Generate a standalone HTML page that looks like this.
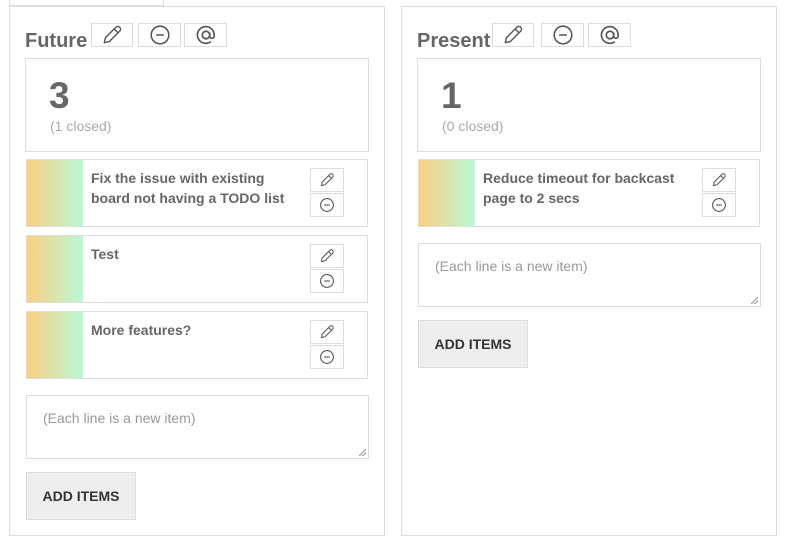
<!DOCTYPE html>
<html><head><style>
*{box-sizing:border-box;margin:0;padding:0}
body{width:791px;height:542px;background:#fff;font-family:"Liberation Sans",Arial,sans-serif;position:relative;overflow:hidden}
.abs{position:absolute}
.col{position:absolute;top:6px;width:376px;height:530px;border:1px solid #ddd}
.title{position:absolute;font-size:20px;font-weight:bold;color:#666}
.ib{position:absolute;top:23px;height:24px;border:1px solid #ddd;display:flex;align-items:center;justify-content:center}
.count{position:absolute;top:58px;width:344px;height:94px;border:1px solid #ddd}
.count b{position:absolute;left:23px;top:16px;font-size:37px;color:#666}
.count span{position:absolute;left:24px;top:59px;font-size:14px;color:#aaa}
.card{position:absolute;width:342px;height:68px;border:1px solid #ddd}
.card .g{position:absolute;left:0;top:0;width:56px;height:66px;background:linear-gradient(90deg,#fccf80,#b8fad6)}
.card .t{position:absolute;left:64px;top:8px;width:210px;font-size:14px;font-weight:bold;color:#666;line-height:20px}
.sb{position:absolute;left:283px;width:34px;height:24px;border:1px solid #ddd;display:flex;align-items:center;justify-content:center}
.ta{position:absolute;width:343px;height:64px;border:1px solid #ddd;font-size:14px;color:#999;padding:14px 16px}
.ta:after{content:"";position:absolute;right:2px;bottom:2px;width:7px;height:7px;background:linear-gradient(135deg,transparent 45%,#999 45%,#999 55%,transparent 55%,transparent 70%,#999 70%,#999 80%,transparent 80%)}
.btn{position:absolute;width:110px;height:48px;background:#eee;border:1px solid #ddd;font-size:14px;font-weight:bold;color:#333;display:flex;align-items:center;justify-content:center}
</style></head><body>
<div class="abs" style="left:9px;top:-1px;width:155px;height:7px;border:1px solid #ddd;border-top:none"></div>
<svg width="0" height="0" style="position:absolute"><defs>
<symbol id="pen" viewBox="0 0 20 20"><path d="M3 17l1-4.5L13.5 3a1.8 1.8 0 0 1 3.5 3.5L7.5 16z M12 4.5l3.5 3.5" fill="none" stroke="#555" stroke-width="1.3" stroke-linejoin="round"/></symbol>
<symbol id="min" viewBox="0 0 20 20"><circle cx="10" cy="10" r="8" fill="none" stroke="#555" stroke-width="1.4"/><path d="M6.5 10h7" stroke="#555" stroke-width="1.4"/></symbol>
<symbol id="at" viewBox="0 0 20 20"><circle cx="10" cy="10" r="3.4" fill="none" stroke="#555" stroke-width="1.5"/><path d="M13.4 8v3a2 2 0 0 0 4 0v-1a7.6 7.6 0 1 0-3 6" fill="none" stroke="#555" stroke-width="1.5"/></symbol>
</defs></svg>

<div class="col" style="left:9px"></div>
<div class="title" style="left:25px;top:30px">Future</div>
<div class="ib" style="left:91px;width:42px"><svg width="22" height="22"><use href="#pen"/></svg></div>
<div class="ib" style="left:138px;width:43px"><svg width="22" height="22"><use href="#min"/></svg></div>
<div class="ib" style="left:184px;width:43px"><svg width="22" height="22"><use href="#at"/></svg></div>
<div class="count" style="left:25px"><b>3</b><span>(1 closed)</span></div>
<div class="card" style="left:26px;top:159px"><div class="g"></div><div class="t">Fix the issue with existing board not having a TODO list</div><div class="sb" style="top:8px"><svg width="16" height="16"><use href="#pen"/></svg></div><div class="sb" style="top:33px"><svg width="16" height="16"><use href="#min"/></svg></div></div>
<div class="card" style="left:26px;top:235px"><div class="g"></div><div class="t">Test</div><div class="sb" style="top:8px"><svg width="16" height="16"><use href="#pen"/></svg></div><div class="sb" style="top:33px"><svg width="16" height="16"><use href="#min"/></svg></div></div>
<div class="card" style="left:26px;top:311px"><div class="g"></div><div class="t">More features?</div><div class="sb" style="top:8px"><svg width="16" height="16"><use href="#pen"/></svg></div><div class="sb" style="top:33px"><svg width="16" height="16"><use href="#min"/></svg></div></div>
<div class="ta" style="left:26px;top:395px">(Each line is a new item)</div>
<div class="btn" style="left:26px;top:472px">ADD ITEMS</div>

<div class="col" style="left:401px"></div>
<div class="title" style="left:417px;top:30px">Present</div>
<div class="ib" style="left:492px;width:42px"><svg width="22" height="22"><use href="#pen"/></svg></div>
<div class="ib" style="left:541px;width:43px"><svg width="22" height="22"><use href="#min"/></svg></div>
<div class="ib" style="left:588px;width:43px"><svg width="22" height="22"><use href="#at"/></svg></div>
<div class="count" style="left:417px"><b>1</b><span>(0 closed)</span></div>
<div class="card" style="left:418px;top:159px"><div class="g"></div><div class="t">Reduce timeout for backcast page to 2 secs</div><div class="sb" style="top:8px"><svg width="16" height="16"><use href="#pen"/></svg></div><div class="sb" style="top:33px"><svg width="16" height="16"><use href="#min"/></svg></div></div>
<div class="ta" style="left:418px;top:243px">(Each line is a new item)</div>
<div class="btn" style="left:418px;top:320px">ADD ITEMS</div>
</body></html>
